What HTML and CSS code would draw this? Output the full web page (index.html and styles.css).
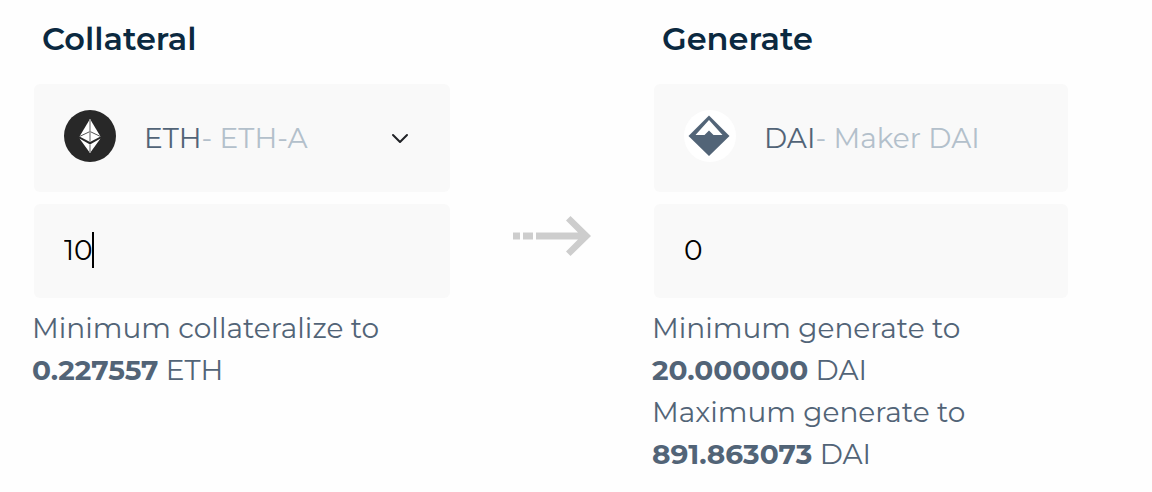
FILE: index.html
```html
<!DOCTYPE html>
<html lang="en">
<head>
<meta charset="utf-8">
<meta name="viewport" content="width=device-width, initial-scale=1">
<title>Collateral and Generate</title>
<link rel="stylesheet" href="styles.css">
</head>
<body>
<main class="exchange">
  <section class="column">
    <h2 class="title"><label for="collateral-amount">Collateral</label></h2>
    <div class="token">
      <svg class="token-icon" viewBox="0 0 52 52" aria-hidden="true">
        <circle cx="26" cy="26" r="26" fill="#282828"/>
        <path fill="#fff" d="M26 9 15.500 26.500 26 32 36.500 26.500Z"/>
        <path fill="#fff" d="M15.500 28.500 26 34.500 36.500 28.500 26 43Z"/>
        <path fill="none" stroke="#555" stroke-width="1" d="M15.500 26.500 26 21.500 36.500 26.500"/>
        <path stroke="#929292" stroke-width="1.500" d="M26 9V32M26 34.500V43"/>
      </svg>
      <label class="symbol" for="collateral-type">ETH</label>
      <div class="picker">
        <select class="type" id="collateral-type">
          <option>- ETH-A</option>
        </select>
        <svg class="chevron" viewBox="0 0 20 12" aria-hidden="true">
          <path d="M3 2 10 9 17 2" fill="none" stroke="#202226" stroke-width="2" stroke-linecap="round" stroke-linejoin="round"/>
        </svg>
      </div>
    </div>
    <div class="field">
      <input class="amount" id="collateral-amount" type="text" inputmode="decimal" value="10">
      <span class="caret" aria-hidden="true"></span>
    </div>
    <p class="limit">Minimum collateralize to<br><strong>0.227557</strong> ETH</p>
  </section>

  <svg class="arrow" viewBox="0 0 78 40" aria-hidden="true">
    <path fill="#cdcdcd" d="M0 16.500h7v7H0zM10 16.500h10v7H10zM23 16.500h42L53 4.500 57.500 0 78 20 57.500 40 53 35.500 65 23.500H23z"/>
  </svg>

  <section class="column">
    <h2 class="title"><label for="generate-amount">Generate</label></h2>
    <div class="token">
      <svg class="token-icon" viewBox="0 0 52 52" aria-hidden="true">
        <circle cx="26" cy="26" r="26" fill="#fff"/>
        <path fill="#526477" fill-rule="evenodd" d="M25 5.500 45.500 26 25 46 4.500 26ZM25 10 11.500 25H20.500L25 20.500 29.500 25H38.500Z"/>
      </svg>
      <span class="symbol">DAI</span><span class="type">- Maker DAI</span>
    </div>
    <div class="field">
      <input class="amount" id="generate-amount" type="text" inputmode="decimal" value="0">
    </div>
    <p class="limit">Minimum generate to<br><strong>20.000000</strong> DAI</p>
    <p class="limit">Maximum generate to<br><strong>891.863073</strong> DAI</p>
  </section>
</main>
</body>
</html>
```
FILE: styles.css
```css
* {
  box-sizing: border-box;
}

body {
  margin: 0;
  background: #fefefe;
  color: #526477;
  font-family: Montserrat, Inter, sans-serif;
  font-size: 28px;
  line-height: 42px;
  -webkit-font-smoothing: antialiased;
}

.exchange {
  display: grid;
  grid-template-columns: 416fr 204px 414fr;
  align-items: start;
  padding: 18px 84px 16px 34px;
}

.title {
  margin: 0 0 24px;
  padding-left: 8px;
  color: #0b2940;
  font-size: 32px;
  font-weight: 600;
  line-height: 42px;
}

.token {
  display: flex;
  align-items: center;
  height: 108px;
  margin-bottom: 12px;
  padding: 0 30px;
  border-radius: 6px;
  background: #f9f9f9;
}

.token-icon {
  flex: none;
  width: 52px;
  height: 52px;
  margin: 0 28px 4px 0;
}

.picker {
  position: relative;
  flex: 1;
  display: flex;
}

.type {
  color: #b3c0cb;
}

select.type {
  flex: 1;
  min-width: 0;
  padding: 0;
  border: 0;
  outline: 0;
  appearance: none;
  background: transparent;
  font: inherit;
}

.chevron {
  position: absolute;
  top: 16px;
  right: 10px;
  width: 20px;
  height: 12px;
  pointer-events: none;
}

.field {
  position: relative;
  margin-bottom: 9px;
}

.amount {
  display: block;
  width: 100%;
  height: 94px;
  padding: 0 30px 2px;
  border: 0;
  border-radius: 6px;
  outline: 0;
  background: #f9f9f9;
  color: #000;
  caret-color: transparent;
  font: inherit;
}

.caret {
  position: absolute;
  top: 28px;
  left: 58px;
  width: 2px;
  height: 36px;
  background: #000;
}

.limit {
  margin: 0 0 0 -2px;
}

.limit strong {
  font-weight: 700;
}

.arrow {
  justify-self: center;
  width: 78px;
  height: 40px;
  margin-top: 198px;
}
```
